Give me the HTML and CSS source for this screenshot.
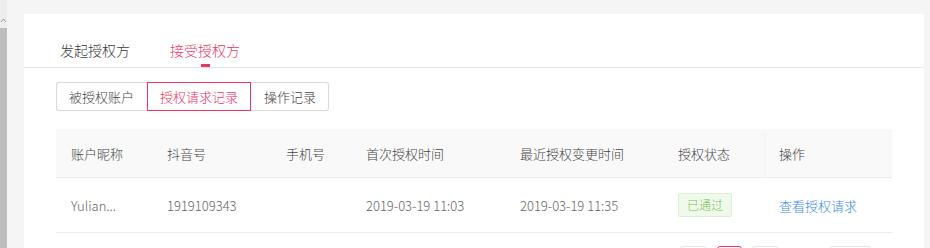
FILE: index.html
```html
<!DOCTYPE html>
<html lang="zh-CN">
<head>
<meta charset="utf-8">
<link rel="stylesheet" href="styles.css">
</head>
<body>
<div class="page">
  <div class="scrollbar">
    <svg class="arrow" width="7" height="8" viewBox="0 0 7 8"><path d="M1 6 L3.5 3 L6 6" fill="none" stroke="#999" stroke-width="1"/></svg>
    <div class="thumb"></div>
  </div>
  <div class="main">
    <div class="card">
      <div class="tabs">
        <div class="tab">发起授权方</div>
        <div class="tab active">接受授权方<span class="ink"></span></div>
      </div>
      <div class="seg">
        <div class="seg-btn first">被授权账户</div>
        <div class="seg-btn on">授权请求记录</div>
        <div class="seg-btn last">操作记录</div>
      </div>
      <table class="grid">
        <colgroup>
          <col class="c1"><col class="c2"><col class="c3"><col class="c4"><col class="c5"><col class="c6"><col class="c7">
        </colgroup>
        <thead>
          <tr><th>账户昵称</th><th>抖音号</th><th>手机号</th><th>首次授权时间</th><th>最近授权变更时间</th><th>授权状态</th><th class="fixed">操作</th></tr>
        </thead>
        <tbody>
          <tr><td>Yulian...</td><td>1919109343</td><td></td><td>2019-03-19 11:03</td><td>2019-03-19 11:35</td><td><span class="tag">已通过</span></td><td><span class="link">查看授权请求</span></td></tr>
        </tbody>
      </table>
      <div class="pager">
        <span class="pg"></span><span class="pg cur"></span><span class="pg"></span><span class="pg wide"></span>
      </div>
    </div>
  </div>
</div>
</body>
</html>
```
FILE: styles.css
```css
html, body {
  margin: 0;
  padding: 0;
  overflow: hidden;
  height: 248px;
}
body {
  background: #f5f5f5;
  font-family: "Noto Sans CJK SC", "Noto Sans", sans-serif;
  font-weight: 300;
  color: #333;
}
.page {
  display: flex;
  width: 930px;
  height: 248px;
  overflow: hidden;
}
.scrollbar {
  width: 7px;
  display: flex;
  flex-direction: column;
  background: #ededed;
}
.arrow {
  margin-top: 16px;
  display: block;
}
.thumb {
  margin-top: 4px;
  flex: 1;
  background: #bdbdbd;
}
.main {
  padding: 14px 0 0 17px;
}
.card {
  width: 836px;
  height: 234px;
  overflow: hidden;
  background: #fff;
  padding: 0 32px;
}
.tabs {
  display: flex;
  gap: 40px;
  height: 53px;
  margin: 0 -32px;
  padding: 0 36px;
  border-bottom: 1px solid #e6e6e6;
}
.tab {
  position: relative;
  font-size: 14px;
  line-height: 20px;
  padding-top: 26px;
  color: #3a3a3a;
}
.tab.active {
  color: #ec3461;
}
.ink {
  position: absolute;
  left: 31px;
  bottom: 0;
  width: 9px;
  height: 3px;
  background: #ec3461;
}
.seg {
  display: flex;
  margin-top: 14px;
  height: 29px;
}
.seg-btn {
  box-sizing: border-box;
  height: 29px;
  padding: 0 12px;
  font-size: 13px;
  line-height: 27px;
  color: #444;
  border: 1px solid #d9d9d9;
  background: #fff;
}
.seg-btn.first {
  border-right: none;
  border-radius: 3px 0 0 3px;
  padding-right: 13px;
}
.seg-btn.last {
  border-left: none;
  border-radius: 0 3px 3px 0;
  padding-left: 13px;
}
.seg-btn.on {
  border-color: #ec3461;
  color: #ec3461;
}
.grid {
  margin-top: 18px;
  width: 836px;
  border-collapse: collapse;
  table-layout: fixed;
  font-size: 13px;
}
.c1 { width: 96px; }
.c2 { width: 119px; }
.c3 { width: 80px; }
.c4 { width: 154px; }
.c5 { width: 158px; }
.c6 { width: 101px; }
.c7 { width: 128px; }
.grid th {
  height: 48px;
  padding: 0 0 0 15px;
  text-align: left;
  font-weight: 300;
  color: #444;
  background: #f9f9f9;
  border-bottom: 1px solid #ebebeb;
}
.grid th.fixed {
  box-shadow: inset 1px 0 0 #f4f4f4;
}
.grid td {
  height: 54px;
  padding: 0 0 0 15px;
  color: #666;
  border-bottom: 1px solid #ebebeb;
  white-space: nowrap;
}
.tag {
  display: inline-block;
  box-sizing: border-box;
  height: 24px;
  padding: 0 8px;
  font-size: 12px;
  line-height: 22px;
  color: #72c450;
  background: #f1f9ec;
  border: 1px solid #dbf0cf;
  border-radius: 2px;
}
.link {
  color: #3d8be6;
}
.pager {
  display: flex;
  margin-top: 13px;
  padding-left: 624px;
}
.pg {
  display: block;
  box-sizing: border-box;
  width: 27px;
  height: 28px;
  margin-right: 10px;
  border: 1px solid #e3e3e3;
  border-radius: 3px;
}
.pg.cur {
  width: 25px;
  border-color: #ec3461;
  background: #fff;
}
.pg.wide {
  width: 42px;
  margin-left: 40px;
}
```
